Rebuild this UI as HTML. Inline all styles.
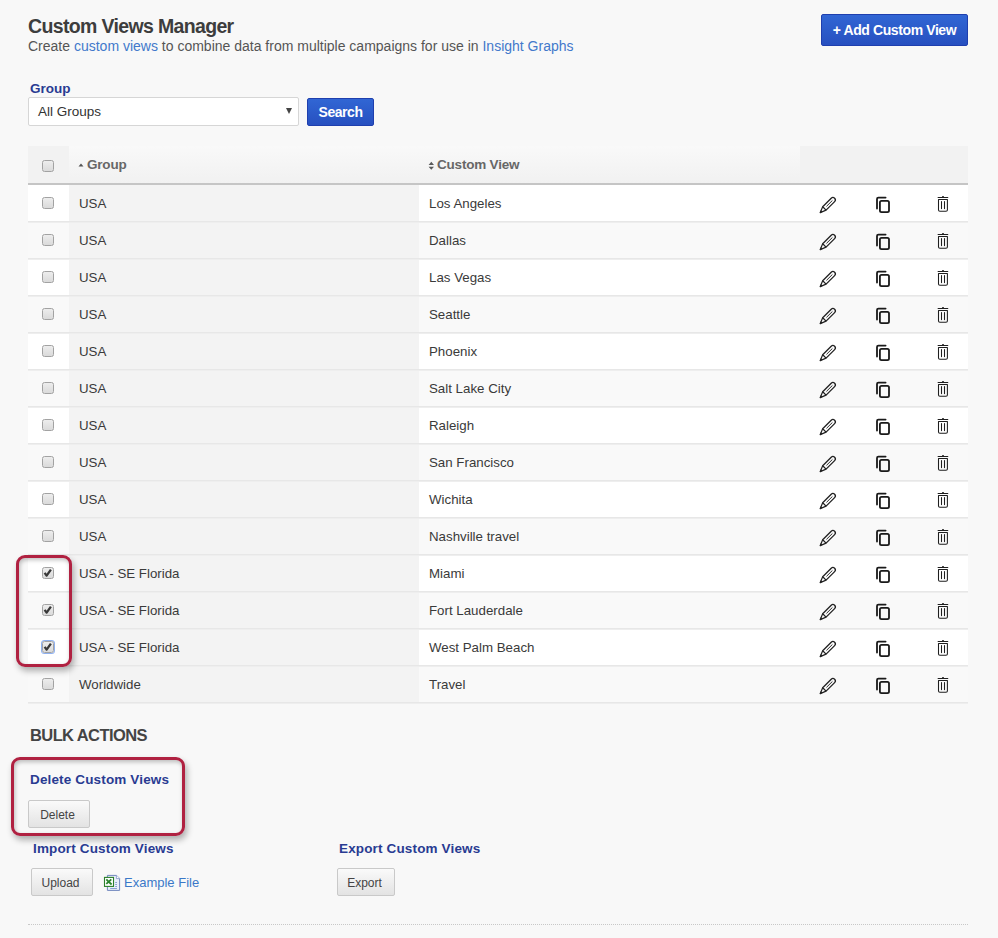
<!DOCTYPE html>
<html><head><meta charset="utf-8"><title>Custom Views Manager</title>
<style>
html,body{margin:0;padding:0}
body{width:998px;height:938px;background:#f8f8f8;position:relative;overflow:hidden;font-family:"Liberation Sans",sans-serif;color:#333}
.abs{position:absolute;white-space:nowrap}
h1{position:absolute;margin:0;left:28px;top:13px;font-size:19.5px;font-weight:bold;color:#3d3d3d;letter-spacing:-0.65px;line-height:26px;white-space:nowrap}
.sub{left:28px;top:37px;font-size:14px;line-height:18px;color:#555}
.sub a{color:#4279cb;text-decoration:none}
.btnb{position:absolute;background:linear-gradient(#3166d4,#2750c0);border:1px solid #1f3fae;border-radius:2px;color:#fff;font-weight:bold;text-align:center;box-sizing:border-box}
.lbl{position:absolute;font-weight:bold;color:#293b92;white-space:nowrap}
.sel{position:absolute;left:28px;top:97px;width:271px;height:29px;box-sizing:border-box;background:#fff;border:1px solid #d6d6d6;border-radius:2px}
.sel span{position:absolute;left:9px;top:5px;font-size:13.5px;line-height:17px;color:#333}
.sel i{position:absolute;left:257px;top:10px;width:0;height:0;border-left:3.5px solid transparent;border-right:3.5px solid transparent;border-top:6px solid #444}
.thead{position:absolute;left:28px;top:146px;width:940px;height:37px;background:#f2f2f2;border-bottom:2px solid #c5c5c5}
.thead .h2{position:absolute;left:41px;top:0;width:731px;height:37px;background:linear-gradient(#f9f9f9,#f1f1f1)}
.ht{position:absolute;top:11px;font-size:13.5px;letter-spacing:-0.2px;line-height:16px;font-weight:bold;color:#676767}
.r{position:absolute;left:28px;width:940px;height:36px;border-bottom:1px solid #e7e7e7}
.ln{position:absolute;left:28px;width:940px;height:1px;background:#eeeeee}
.r.odd{background:#fff}
.r.even{background:#f9f9f9}
.r .c1{position:absolute;left:0;top:0;width:41px;height:36px}
.r .c2{position:absolute;left:41px;top:0;width:350px;height:36px;background:#f3f3f3}
.r.even .c2{background:#f3f3f3}
.r .c2,.r .c3{font-size:13.3px;line-height:16px;padding-top:11px;box-sizing:border-box;padding-left:10px;white-space:nowrap;color:#3a3a3a}
.r .c3{position:absolute;left:391px;top:0;width:381px;height:36px}
.cb{position:absolute;left:14px;top:12px;width:12px;height:12px;box-sizing:border-box;border:1px solid #a2a2a2;border-radius:2.5px;background:linear-gradient(#ededed,#dadada)}
.cb .ck{position:absolute;left:-1px;top:-1px}
.cb.focus{box-shadow:0 0 0 1px #8fb1f0}
.ic{position:absolute}
.btng{position:absolute;box-sizing:border-box;border:1px solid #c9c9c9;border-radius:2px;background:linear-gradient(#fafafa,#e3e3e3);font-size:12px;color:#444;text-align:center;line-height:28px;text-indent:-3px}
.hl{position:absolute;box-sizing:border-box;border:3px solid #b02141;border-radius:9px;box-shadow:2px 4px 6px rgba(0,0,0,0.3), inset 1px 2px 4px rgba(0,0,0,0.25)}
.dots{position:absolute;left:28px;top:924px;width:940px;height:0;border-top:1px dotted #c8c8c8}
</style></head><body>
<h1>Custom Views Manager</h1>
<div class="abs sub">Create <a>custom views</a> to combine data from multiple campaigns for use in <a>Insight Graphs</a></div>
<div class="btnb" style="left:821px;top:14px;width:147px;height:32px;font-size:14px;letter-spacing:-0.4px;line-height:30px">+ Add Custom View</div>

<div class="lbl" style="left:30px;top:81px;font-size:13.5px;line-height:16px">Group</div>
<div class="sel"><span>All Groups</span><i></i></div>
<div class="btnb" style="left:307px;top:98px;width:67px;height:28px;font-size:14px;letter-spacing:-0.45px;line-height:27px">Search</div>

<div class="thead"><div class="h2"></div>
<div class="cb" style="left:14px;top:14px"></div>
<svg class="ic" style="left:50px;top:17px" width="6" height="4" viewBox="0 0 6 4"><path d="M0.5 3.5 L3 0.5 L5.5 3.5 Z" fill="#555"/></svg>
<div class="ht" style="left:59px">Group</div>
<svg class="ic" style="left:400px;top:15px" width="7" height="10" viewBox="0 0 7 10"><path d="M0.6 3.9 L3.3 0.8 L6 3.9 Z M0.6 5.7 L3.3 8.8 L6 5.7 Z" fill="#5a5a5a"/></svg>
<div class="ht" style="left:409px">Custom View</div>
</div>

<div class="r odd" style="top:185px"><div class="c1"><div class="cb"></div></div><div class="c2">USA</div><div class="c3">Los Angeles</div></div>
<svg class="ic" style="left:816px;top:193px" width="24" height="24" viewBox="0 0 24 24"><g transform="translate(-0.4 0.25) rotate(-45 12 12)" fill="none" stroke="#222"><path d="M7.45 9.6 H19.5 A2.4 2.4 0 0 1 19.5 14.4 H7.45 Z" stroke-width="1.3" stroke-linejoin="round"/><path d="M7.45 9.6 L1.6 12 L7.45 14.4" stroke-width="1.2" stroke-linejoin="round"/><path d="M1.3 12 L3.6 11.1 L3.6 12.9 Z" fill="#222" stroke-width="0.5"/><path d="M10.4 12 H18.8" stroke-width="0.9"/></g></svg>
<svg class="ic" style="left:860px;top:185px" width="40" height="40" viewBox="0 0 40 40"><g fill="none" stroke="#1a1a1a" stroke-width="1.8" stroke-linecap="round"><path d="M17 23.5 V14 Q17 12.6 18.4 12.6 H25.6"/><rect x="19.9" y="15.8" width="9.1" height="11.3" rx="1.6"/></g></svg>
<svg class="ic" style="left:931px;top:192px" width="24" height="24" viewBox="0 0 24 24"><g fill="none" stroke="#1f1f1f" stroke-width="1.05"><path d="M7.1 5.45 H16.8" stroke-linecap="round"/><path d="M11.2 5.4 Q11.4 4.2 12 4.2 Q12.6 4.2 12.8 5.4 Z" fill="#1a1a1a" stroke-width="0.8"/><path d="M7.5 7.5 H16.4 V18 Q16.4 19.3 15 19.3 H8.9 Q7.5 19.3 7.5 18 Z" stroke-linejoin="round"/><path d="M10.5 9.4 V16.6 M13.5 9.4 V16.6" stroke-linecap="round"/></g></svg>
<div class="r even" style="top:222px"><div class="c1"><div class="cb"></div></div><div class="c2">USA</div><div class="c3">Dallas</div></div>
<svg class="ic" style="left:816px;top:230px" width="24" height="24" viewBox="0 0 24 24"><g transform="translate(-0.4 0.25) rotate(-45 12 12)" fill="none" stroke="#222"><path d="M7.45 9.6 H19.5 A2.4 2.4 0 0 1 19.5 14.4 H7.45 Z" stroke-width="1.3" stroke-linejoin="round"/><path d="M7.45 9.6 L1.6 12 L7.45 14.4" stroke-width="1.2" stroke-linejoin="round"/><path d="M1.3 12 L3.6 11.1 L3.6 12.9 Z" fill="#222" stroke-width="0.5"/><path d="M10.4 12 H18.8" stroke-width="0.9"/></g></svg>
<svg class="ic" style="left:860px;top:222px" width="40" height="40" viewBox="0 0 40 40"><g fill="none" stroke="#1a1a1a" stroke-width="1.8" stroke-linecap="round"><path d="M17 23.5 V14 Q17 12.6 18.4 12.6 H25.6"/><rect x="19.9" y="15.8" width="9.1" height="11.3" rx="1.6"/></g></svg>
<svg class="ic" style="left:931px;top:229px" width="24" height="24" viewBox="0 0 24 24"><g fill="none" stroke="#1f1f1f" stroke-width="1.05"><path d="M7.1 5.45 H16.8" stroke-linecap="round"/><path d="M11.2 5.4 Q11.4 4.2 12 4.2 Q12.6 4.2 12.8 5.4 Z" fill="#1a1a1a" stroke-width="0.8"/><path d="M7.5 7.5 H16.4 V18 Q16.4 19.3 15 19.3 H8.9 Q7.5 19.3 7.5 18 Z" stroke-linejoin="round"/><path d="M10.5 9.4 V16.6 M13.5 9.4 V16.6" stroke-linecap="round"/></g></svg>
<div class="r odd" style="top:259px"><div class="c1"><div class="cb"></div></div><div class="c2">USA</div><div class="c3">Las Vegas</div></div>
<svg class="ic" style="left:816px;top:267px" width="24" height="24" viewBox="0 0 24 24"><g transform="translate(-0.4 0.25) rotate(-45 12 12)" fill="none" stroke="#222"><path d="M7.45 9.6 H19.5 A2.4 2.4 0 0 1 19.5 14.4 H7.45 Z" stroke-width="1.3" stroke-linejoin="round"/><path d="M7.45 9.6 L1.6 12 L7.45 14.4" stroke-width="1.2" stroke-linejoin="round"/><path d="M1.3 12 L3.6 11.1 L3.6 12.9 Z" fill="#222" stroke-width="0.5"/><path d="M10.4 12 H18.8" stroke-width="0.9"/></g></svg>
<svg class="ic" style="left:860px;top:259px" width="40" height="40" viewBox="0 0 40 40"><g fill="none" stroke="#1a1a1a" stroke-width="1.8" stroke-linecap="round"><path d="M17 23.5 V14 Q17 12.6 18.4 12.6 H25.6"/><rect x="19.9" y="15.8" width="9.1" height="11.3" rx="1.6"/></g></svg>
<svg class="ic" style="left:931px;top:266px" width="24" height="24" viewBox="0 0 24 24"><g fill="none" stroke="#1f1f1f" stroke-width="1.05"><path d="M7.1 5.45 H16.8" stroke-linecap="round"/><path d="M11.2 5.4 Q11.4 4.2 12 4.2 Q12.6 4.2 12.8 5.4 Z" fill="#1a1a1a" stroke-width="0.8"/><path d="M7.5 7.5 H16.4 V18 Q16.4 19.3 15 19.3 H8.9 Q7.5 19.3 7.5 18 Z" stroke-linejoin="round"/><path d="M10.5 9.4 V16.6 M13.5 9.4 V16.6" stroke-linecap="round"/></g></svg>
<div class="r even" style="top:296px"><div class="c1"><div class="cb"></div></div><div class="c2">USA</div><div class="c3">Seattle</div></div>
<svg class="ic" style="left:816px;top:304px" width="24" height="24" viewBox="0 0 24 24"><g transform="translate(-0.4 0.25) rotate(-45 12 12)" fill="none" stroke="#222"><path d="M7.45 9.6 H19.5 A2.4 2.4 0 0 1 19.5 14.4 H7.45 Z" stroke-width="1.3" stroke-linejoin="round"/><path d="M7.45 9.6 L1.6 12 L7.45 14.4" stroke-width="1.2" stroke-linejoin="round"/><path d="M1.3 12 L3.6 11.1 L3.6 12.9 Z" fill="#222" stroke-width="0.5"/><path d="M10.4 12 H18.8" stroke-width="0.9"/></g></svg>
<svg class="ic" style="left:860px;top:296px" width="40" height="40" viewBox="0 0 40 40"><g fill="none" stroke="#1a1a1a" stroke-width="1.8" stroke-linecap="round"><path d="M17 23.5 V14 Q17 12.6 18.4 12.6 H25.6"/><rect x="19.9" y="15.8" width="9.1" height="11.3" rx="1.6"/></g></svg>
<svg class="ic" style="left:931px;top:303px" width="24" height="24" viewBox="0 0 24 24"><g fill="none" stroke="#1f1f1f" stroke-width="1.05"><path d="M7.1 5.45 H16.8" stroke-linecap="round"/><path d="M11.2 5.4 Q11.4 4.2 12 4.2 Q12.6 4.2 12.8 5.4 Z" fill="#1a1a1a" stroke-width="0.8"/><path d="M7.5 7.5 H16.4 V18 Q16.4 19.3 15 19.3 H8.9 Q7.5 19.3 7.5 18 Z" stroke-linejoin="round"/><path d="M10.5 9.4 V16.6 M13.5 9.4 V16.6" stroke-linecap="round"/></g></svg>
<div class="r odd" style="top:333px"><div class="c1"><div class="cb"></div></div><div class="c2">USA</div><div class="c3">Phoenix</div></div>
<svg class="ic" style="left:816px;top:341px" width="24" height="24" viewBox="0 0 24 24"><g transform="translate(-0.4 0.25) rotate(-45 12 12)" fill="none" stroke="#222"><path d="M7.45 9.6 H19.5 A2.4 2.4 0 0 1 19.5 14.4 H7.45 Z" stroke-width="1.3" stroke-linejoin="round"/><path d="M7.45 9.6 L1.6 12 L7.45 14.4" stroke-width="1.2" stroke-linejoin="round"/><path d="M1.3 12 L3.6 11.1 L3.6 12.9 Z" fill="#222" stroke-width="0.5"/><path d="M10.4 12 H18.8" stroke-width="0.9"/></g></svg>
<svg class="ic" style="left:860px;top:333px" width="40" height="40" viewBox="0 0 40 40"><g fill="none" stroke="#1a1a1a" stroke-width="1.8" stroke-linecap="round"><path d="M17 23.5 V14 Q17 12.6 18.4 12.6 H25.6"/><rect x="19.9" y="15.8" width="9.1" height="11.3" rx="1.6"/></g></svg>
<svg class="ic" style="left:931px;top:340px" width="24" height="24" viewBox="0 0 24 24"><g fill="none" stroke="#1f1f1f" stroke-width="1.05"><path d="M7.1 5.45 H16.8" stroke-linecap="round"/><path d="M11.2 5.4 Q11.4 4.2 12 4.2 Q12.6 4.2 12.8 5.4 Z" fill="#1a1a1a" stroke-width="0.8"/><path d="M7.5 7.5 H16.4 V18 Q16.4 19.3 15 19.3 H8.9 Q7.5 19.3 7.5 18 Z" stroke-linejoin="round"/><path d="M10.5 9.4 V16.6 M13.5 9.4 V16.6" stroke-linecap="round"/></g></svg>
<div class="r even" style="top:370px"><div class="c1"><div class="cb"></div></div><div class="c2">USA</div><div class="c3">Salt Lake City</div></div>
<svg class="ic" style="left:816px;top:378px" width="24" height="24" viewBox="0 0 24 24"><g transform="translate(-0.4 0.25) rotate(-45 12 12)" fill="none" stroke="#222"><path d="M7.45 9.6 H19.5 A2.4 2.4 0 0 1 19.5 14.4 H7.45 Z" stroke-width="1.3" stroke-linejoin="round"/><path d="M7.45 9.6 L1.6 12 L7.45 14.4" stroke-width="1.2" stroke-linejoin="round"/><path d="M1.3 12 L3.6 11.1 L3.6 12.9 Z" fill="#222" stroke-width="0.5"/><path d="M10.4 12 H18.8" stroke-width="0.9"/></g></svg>
<svg class="ic" style="left:860px;top:370px" width="40" height="40" viewBox="0 0 40 40"><g fill="none" stroke="#1a1a1a" stroke-width="1.8" stroke-linecap="round"><path d="M17 23.5 V14 Q17 12.6 18.4 12.6 H25.6"/><rect x="19.9" y="15.8" width="9.1" height="11.3" rx="1.6"/></g></svg>
<svg class="ic" style="left:931px;top:377px" width="24" height="24" viewBox="0 0 24 24"><g fill="none" stroke="#1f1f1f" stroke-width="1.05"><path d="M7.1 5.45 H16.8" stroke-linecap="round"/><path d="M11.2 5.4 Q11.4 4.2 12 4.2 Q12.6 4.2 12.8 5.4 Z" fill="#1a1a1a" stroke-width="0.8"/><path d="M7.5 7.5 H16.4 V18 Q16.4 19.3 15 19.3 H8.9 Q7.5 19.3 7.5 18 Z" stroke-linejoin="round"/><path d="M10.5 9.4 V16.6 M13.5 9.4 V16.6" stroke-linecap="round"/></g></svg>
<div class="r odd" style="top:407px"><div class="c1"><div class="cb"></div></div><div class="c2">USA</div><div class="c3">Raleigh</div></div>
<svg class="ic" style="left:816px;top:415px" width="24" height="24" viewBox="0 0 24 24"><g transform="translate(-0.4 0.25) rotate(-45 12 12)" fill="none" stroke="#222"><path d="M7.45 9.6 H19.5 A2.4 2.4 0 0 1 19.5 14.4 H7.45 Z" stroke-width="1.3" stroke-linejoin="round"/><path d="M7.45 9.6 L1.6 12 L7.45 14.4" stroke-width="1.2" stroke-linejoin="round"/><path d="M1.3 12 L3.6 11.1 L3.6 12.9 Z" fill="#222" stroke-width="0.5"/><path d="M10.4 12 H18.8" stroke-width="0.9"/></g></svg>
<svg class="ic" style="left:860px;top:407px" width="40" height="40" viewBox="0 0 40 40"><g fill="none" stroke="#1a1a1a" stroke-width="1.8" stroke-linecap="round"><path d="M17 23.5 V14 Q17 12.6 18.4 12.6 H25.6"/><rect x="19.9" y="15.8" width="9.1" height="11.3" rx="1.6"/></g></svg>
<svg class="ic" style="left:931px;top:414px" width="24" height="24" viewBox="0 0 24 24"><g fill="none" stroke="#1f1f1f" stroke-width="1.05"><path d="M7.1 5.45 H16.8" stroke-linecap="round"/><path d="M11.2 5.4 Q11.4 4.2 12 4.2 Q12.6 4.2 12.8 5.4 Z" fill="#1a1a1a" stroke-width="0.8"/><path d="M7.5 7.5 H16.4 V18 Q16.4 19.3 15 19.3 H8.9 Q7.5 19.3 7.5 18 Z" stroke-linejoin="round"/><path d="M10.5 9.4 V16.6 M13.5 9.4 V16.6" stroke-linecap="round"/></g></svg>
<div class="r even" style="top:444px"><div class="c1"><div class="cb"></div></div><div class="c2">USA</div><div class="c3">San Francisco</div></div>
<svg class="ic" style="left:816px;top:452px" width="24" height="24" viewBox="0 0 24 24"><g transform="translate(-0.4 0.25) rotate(-45 12 12)" fill="none" stroke="#222"><path d="M7.45 9.6 H19.5 A2.4 2.4 0 0 1 19.5 14.4 H7.45 Z" stroke-width="1.3" stroke-linejoin="round"/><path d="M7.45 9.6 L1.6 12 L7.45 14.4" stroke-width="1.2" stroke-linejoin="round"/><path d="M1.3 12 L3.6 11.1 L3.6 12.9 Z" fill="#222" stroke-width="0.5"/><path d="M10.4 12 H18.8" stroke-width="0.9"/></g></svg>
<svg class="ic" style="left:860px;top:444px" width="40" height="40" viewBox="0 0 40 40"><g fill="none" stroke="#1a1a1a" stroke-width="1.8" stroke-linecap="round"><path d="M17 23.5 V14 Q17 12.6 18.4 12.6 H25.6"/><rect x="19.9" y="15.8" width="9.1" height="11.3" rx="1.6"/></g></svg>
<svg class="ic" style="left:931px;top:451px" width="24" height="24" viewBox="0 0 24 24"><g fill="none" stroke="#1f1f1f" stroke-width="1.05"><path d="M7.1 5.45 H16.8" stroke-linecap="round"/><path d="M11.2 5.4 Q11.4 4.2 12 4.2 Q12.6 4.2 12.8 5.4 Z" fill="#1a1a1a" stroke-width="0.8"/><path d="M7.5 7.5 H16.4 V18 Q16.4 19.3 15 19.3 H8.9 Q7.5 19.3 7.5 18 Z" stroke-linejoin="round"/><path d="M10.5 9.4 V16.6 M13.5 9.4 V16.6" stroke-linecap="round"/></g></svg>
<div class="r odd" style="top:481px"><div class="c1"><div class="cb"></div></div><div class="c2">USA</div><div class="c3">Wichita</div></div>
<svg class="ic" style="left:816px;top:489px" width="24" height="24" viewBox="0 0 24 24"><g transform="translate(-0.4 0.25) rotate(-45 12 12)" fill="none" stroke="#222"><path d="M7.45 9.6 H19.5 A2.4 2.4 0 0 1 19.5 14.4 H7.45 Z" stroke-width="1.3" stroke-linejoin="round"/><path d="M7.45 9.6 L1.6 12 L7.45 14.4" stroke-width="1.2" stroke-linejoin="round"/><path d="M1.3 12 L3.6 11.1 L3.6 12.9 Z" fill="#222" stroke-width="0.5"/><path d="M10.4 12 H18.8" stroke-width="0.9"/></g></svg>
<svg class="ic" style="left:860px;top:481px" width="40" height="40" viewBox="0 0 40 40"><g fill="none" stroke="#1a1a1a" stroke-width="1.8" stroke-linecap="round"><path d="M17 23.5 V14 Q17 12.6 18.4 12.6 H25.6"/><rect x="19.9" y="15.8" width="9.1" height="11.3" rx="1.6"/></g></svg>
<svg class="ic" style="left:931px;top:488px" width="24" height="24" viewBox="0 0 24 24"><g fill="none" stroke="#1f1f1f" stroke-width="1.05"><path d="M7.1 5.45 H16.8" stroke-linecap="round"/><path d="M11.2 5.4 Q11.4 4.2 12 4.2 Q12.6 4.2 12.8 5.4 Z" fill="#1a1a1a" stroke-width="0.8"/><path d="M7.5 7.5 H16.4 V18 Q16.4 19.3 15 19.3 H8.9 Q7.5 19.3 7.5 18 Z" stroke-linejoin="round"/><path d="M10.5 9.4 V16.6 M13.5 9.4 V16.6" stroke-linecap="round"/></g></svg>
<div class="r even" style="top:518px"><div class="c1"><div class="cb"></div></div><div class="c2">USA</div><div class="c3">Nashville travel</div></div>
<svg class="ic" style="left:816px;top:526px" width="24" height="24" viewBox="0 0 24 24"><g transform="translate(-0.4 0.25) rotate(-45 12 12)" fill="none" stroke="#222"><path d="M7.45 9.6 H19.5 A2.4 2.4 0 0 1 19.5 14.4 H7.45 Z" stroke-width="1.3" stroke-linejoin="round"/><path d="M7.45 9.6 L1.6 12 L7.45 14.4" stroke-width="1.2" stroke-linejoin="round"/><path d="M1.3 12 L3.6 11.1 L3.6 12.9 Z" fill="#222" stroke-width="0.5"/><path d="M10.4 12 H18.8" stroke-width="0.9"/></g></svg>
<svg class="ic" style="left:860px;top:518px" width="40" height="40" viewBox="0 0 40 40"><g fill="none" stroke="#1a1a1a" stroke-width="1.8" stroke-linecap="round"><path d="M17 23.5 V14 Q17 12.6 18.4 12.6 H25.6"/><rect x="19.9" y="15.8" width="9.1" height="11.3" rx="1.6"/></g></svg>
<svg class="ic" style="left:931px;top:525px" width="24" height="24" viewBox="0 0 24 24"><g fill="none" stroke="#1f1f1f" stroke-width="1.05"><path d="M7.1 5.45 H16.8" stroke-linecap="round"/><path d="M11.2 5.4 Q11.4 4.2 12 4.2 Q12.6 4.2 12.8 5.4 Z" fill="#1a1a1a" stroke-width="0.8"/><path d="M7.5 7.5 H16.4 V18 Q16.4 19.3 15 19.3 H8.9 Q7.5 19.3 7.5 18 Z" stroke-linejoin="round"/><path d="M10.5 9.4 V16.6 M13.5 9.4 V16.6" stroke-linecap="round"/></g></svg>
<div class="r odd" style="top:555px"><div class="c1"><div class="cb checked"><svg class="ck" width="12" height="12" viewBox="0 0 12 12"><path d="M2.6 5.9 L4.6 8.6 L8.9 2.6" fill="none" stroke="#383838" stroke-width="2.3" stroke-linecap="butt" stroke-linejoin="round"/></svg></div></div><div class="c2">USA - SE Florida</div><div class="c3">Miami</div></div>
<svg class="ic" style="left:816px;top:563px" width="24" height="24" viewBox="0 0 24 24"><g transform="translate(-0.4 0.25) rotate(-45 12 12)" fill="none" stroke="#222"><path d="M7.45 9.6 H19.5 A2.4 2.4 0 0 1 19.5 14.4 H7.45 Z" stroke-width="1.3" stroke-linejoin="round"/><path d="M7.45 9.6 L1.6 12 L7.45 14.4" stroke-width="1.2" stroke-linejoin="round"/><path d="M1.3 12 L3.6 11.1 L3.6 12.9 Z" fill="#222" stroke-width="0.5"/><path d="M10.4 12 H18.8" stroke-width="0.9"/></g></svg>
<svg class="ic" style="left:860px;top:555px" width="40" height="40" viewBox="0 0 40 40"><g fill="none" stroke="#1a1a1a" stroke-width="1.8" stroke-linecap="round"><path d="M17 23.5 V14 Q17 12.6 18.4 12.6 H25.6"/><rect x="19.9" y="15.8" width="9.1" height="11.3" rx="1.6"/></g></svg>
<svg class="ic" style="left:931px;top:562px" width="24" height="24" viewBox="0 0 24 24"><g fill="none" stroke="#1f1f1f" stroke-width="1.05"><path d="M7.1 5.45 H16.8" stroke-linecap="round"/><path d="M11.2 5.4 Q11.4 4.2 12 4.2 Q12.6 4.2 12.8 5.4 Z" fill="#1a1a1a" stroke-width="0.8"/><path d="M7.5 7.5 H16.4 V18 Q16.4 19.3 15 19.3 H8.9 Q7.5 19.3 7.5 18 Z" stroke-linejoin="round"/><path d="M10.5 9.4 V16.6 M13.5 9.4 V16.6" stroke-linecap="round"/></g></svg>
<div class="r even" style="top:592px"><div class="c1"><div class="cb checked"><svg class="ck" width="12" height="12" viewBox="0 0 12 12"><path d="M2.6 5.9 L4.6 8.6 L8.9 2.6" fill="none" stroke="#383838" stroke-width="2.3" stroke-linecap="butt" stroke-linejoin="round"/></svg></div></div><div class="c2">USA - SE Florida</div><div class="c3">Fort Lauderdale</div></div>
<svg class="ic" style="left:816px;top:600px" width="24" height="24" viewBox="0 0 24 24"><g transform="translate(-0.4 0.25) rotate(-45 12 12)" fill="none" stroke="#222"><path d="M7.45 9.6 H19.5 A2.4 2.4 0 0 1 19.5 14.4 H7.45 Z" stroke-width="1.3" stroke-linejoin="round"/><path d="M7.45 9.6 L1.6 12 L7.45 14.4" stroke-width="1.2" stroke-linejoin="round"/><path d="M1.3 12 L3.6 11.1 L3.6 12.9 Z" fill="#222" stroke-width="0.5"/><path d="M10.4 12 H18.8" stroke-width="0.9"/></g></svg>
<svg class="ic" style="left:860px;top:592px" width="40" height="40" viewBox="0 0 40 40"><g fill="none" stroke="#1a1a1a" stroke-width="1.8" stroke-linecap="round"><path d="M17 23.5 V14 Q17 12.6 18.4 12.6 H25.6"/><rect x="19.9" y="15.8" width="9.1" height="11.3" rx="1.6"/></g></svg>
<svg class="ic" style="left:931px;top:599px" width="24" height="24" viewBox="0 0 24 24"><g fill="none" stroke="#1f1f1f" stroke-width="1.05"><path d="M7.1 5.45 H16.8" stroke-linecap="round"/><path d="M11.2 5.4 Q11.4 4.2 12 4.2 Q12.6 4.2 12.8 5.4 Z" fill="#1a1a1a" stroke-width="0.8"/><path d="M7.5 7.5 H16.4 V18 Q16.4 19.3 15 19.3 H8.9 Q7.5 19.3 7.5 18 Z" stroke-linejoin="round"/><path d="M10.5 9.4 V16.6 M13.5 9.4 V16.6" stroke-linecap="round"/></g></svg>
<div class="r odd" style="top:629px"><div class="c1"><div class="cb checked focus"><svg class="ck" width="12" height="12" viewBox="0 0 12 12"><path d="M2.6 5.9 L4.6 8.6 L8.9 2.6" fill="none" stroke="#383838" stroke-width="2.3" stroke-linecap="butt" stroke-linejoin="round"/></svg></div></div><div class="c2">USA - SE Florida</div><div class="c3">West Palm Beach</div></div>
<svg class="ic" style="left:816px;top:637px" width="24" height="24" viewBox="0 0 24 24"><g transform="translate(-0.4 0.25) rotate(-45 12 12)" fill="none" stroke="#222"><path d="M7.45 9.6 H19.5 A2.4 2.4 0 0 1 19.5 14.4 H7.45 Z" stroke-width="1.3" stroke-linejoin="round"/><path d="M7.45 9.6 L1.6 12 L7.45 14.4" stroke-width="1.2" stroke-linejoin="round"/><path d="M1.3 12 L3.6 11.1 L3.6 12.9 Z" fill="#222" stroke-width="0.5"/><path d="M10.4 12 H18.8" stroke-width="0.9"/></g></svg>
<svg class="ic" style="left:860px;top:629px" width="40" height="40" viewBox="0 0 40 40"><g fill="none" stroke="#1a1a1a" stroke-width="1.8" stroke-linecap="round"><path d="M17 23.5 V14 Q17 12.6 18.4 12.6 H25.6"/><rect x="19.9" y="15.8" width="9.1" height="11.3" rx="1.6"/></g></svg>
<svg class="ic" style="left:931px;top:636px" width="24" height="24" viewBox="0 0 24 24"><g fill="none" stroke="#1f1f1f" stroke-width="1.05"><path d="M7.1 5.45 H16.8" stroke-linecap="round"/><path d="M11.2 5.4 Q11.4 4.2 12 4.2 Q12.6 4.2 12.8 5.4 Z" fill="#1a1a1a" stroke-width="0.8"/><path d="M7.5 7.5 H16.4 V18 Q16.4 19.3 15 19.3 H8.9 Q7.5 19.3 7.5 18 Z" stroke-linejoin="round"/><path d="M10.5 9.4 V16.6 M13.5 9.4 V16.6" stroke-linecap="round"/></g></svg>
<div class="r even" style="top:666px"><div class="c1"><div class="cb"></div></div><div class="c2">Worldwide</div><div class="c3">Travel</div></div>
<svg class="ic" style="left:816px;top:674px" width="24" height="24" viewBox="0 0 24 24"><g transform="translate(-0.4 0.25) rotate(-45 12 12)" fill="none" stroke="#222"><path d="M7.45 9.6 H19.5 A2.4 2.4 0 0 1 19.5 14.4 H7.45 Z" stroke-width="1.3" stroke-linejoin="round"/><path d="M7.45 9.6 L1.6 12 L7.45 14.4" stroke-width="1.2" stroke-linejoin="round"/><path d="M1.3 12 L3.6 11.1 L3.6 12.9 Z" fill="#222" stroke-width="0.5"/><path d="M10.4 12 H18.8" stroke-width="0.9"/></g></svg>
<svg class="ic" style="left:860px;top:666px" width="40" height="40" viewBox="0 0 40 40"><g fill="none" stroke="#1a1a1a" stroke-width="1.8" stroke-linecap="round"><path d="M17 23.5 V14 Q17 12.6 18.4 12.6 H25.6"/><rect x="19.9" y="15.8" width="9.1" height="11.3" rx="1.6"/></g></svg>
<svg class="ic" style="left:931px;top:673px" width="24" height="24" viewBox="0 0 24 24"><g fill="none" stroke="#1f1f1f" stroke-width="1.05"><path d="M7.1 5.45 H16.8" stroke-linecap="round"/><path d="M11.2 5.4 Q11.4 4.2 12 4.2 Q12.6 4.2 12.8 5.4 Z" fill="#1a1a1a" stroke-width="0.8"/><path d="M7.5 7.5 H16.4 V18 Q16.4 19.3 15 19.3 H8.9 Q7.5 19.3 7.5 18 Z" stroke-linejoin="round"/><path d="M10.5 9.4 V16.6 M13.5 9.4 V16.6" stroke-linecap="round"/></g></svg>
<div class="ln" style="top:222px"></div>
<div class="ln" style="top:259px"></div>
<div class="ln" style="top:296px"></div>
<div class="ln" style="top:333px"></div>
<div class="ln" style="top:370px"></div>
<div class="ln" style="top:407px"></div>
<div class="ln" style="top:444px"></div>
<div class="ln" style="top:481px"></div>
<div class="ln" style="top:518px"></div>
<div class="ln" style="top:555px"></div>
<div class="ln" style="top:592px"></div>
<div class="ln" style="top:629px"></div>
<div class="ln" style="top:666px"></div>
<div class="ln" style="top:703px"></div>

<div class="hl" style="left:16px;top:555px;width:56px;height:112px"></div>

<div class="abs" style="left:30px;top:725px;font-size:16.5px;letter-spacing:-0.6px;line-height:20px;font-weight:bold;color:#444">BULK ACTIONS</div>
<div class="lbl" style="left:30px;top:772px;font-size:13.5px;letter-spacing:0.15px;line-height:16px">Delete Custom Views</div>
<div class="btng" style="left:28px;top:800px;width:62px;height:28px">Delete</div>
<div class="hl" style="left:11px;top:757px;width:174px;height:79px"></div>

<div class="lbl" style="left:33px;top:841px;font-size:13.5px;letter-spacing:0.15px;line-height:16px">Import Custom Views</div>
<div class="btng" style="left:31px;top:868px;width:62px;height:28px">Upload</div>
<svg class="ic" style="left:100px;top:870px" width="24" height="24" viewBox="0 0 24 24">
<path d="M7.4 5.4 H16.6 L19.6 8.4 V20.4 H7.4 Z" fill="#e9eefa" stroke="#7288bd" stroke-width="1"/>
<path d="M16.4 5.4 V8.6 H19.6" fill="#fff" stroke="#8a9ecb" stroke-width="0.9"/>
<path d="M15.2 12.5 H17 M15.2 14.5 H17 M15.2 16.5 H17 M10.2 18.5 H17" stroke="#7f98cc" stroke-width="0.9"/>
<rect x="4.5" y="7.4" width="9" height="9" fill="#fff" stroke="#2b7f2b" stroke-width="1.1"/>
<path d="M6.3 9.3 L11.6 14.5 M11.3 9.3 L6.3 13.8" stroke="#2b852e" stroke-width="1.8"/>
</svg>
<div class="abs" style="left:124px;top:875px;font-size:13px;line-height:16px;color:#3b78c8">Example File</div>

<div class="lbl" style="left:339px;top:841px;font-size:13.5px;letter-spacing:0.15px;line-height:16px">Export Custom Views</div>
<div class="btng" style="left:337px;top:868px;width:58px;height:28px">Export</div>

<div class="dots"></div>
</body></html>
